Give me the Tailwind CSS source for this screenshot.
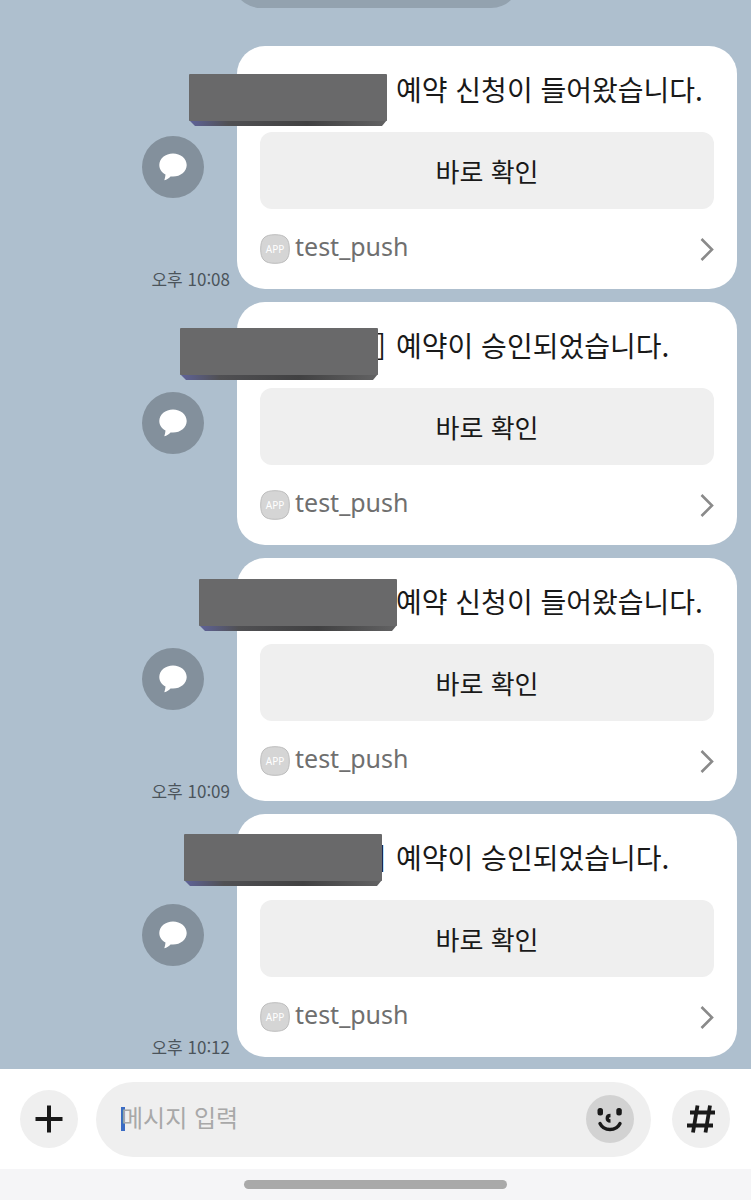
<!DOCTYPE html>
<html lang="ko">
<head>
    <meta charset="UTF-8">
    <meta name="viewport" content="width=device-width, initial-scale=1.0">
    <title>채팅방</title>
    <script src="https://cdn.jsdelivr.net/npm/@tailwindcss/browser@4"></script>
</head>
<body class="min-h-screen flex flex-col bg-[#aebfce] text-[#191919] font-['Noto_Sans_CJK_KR','Noto_Sans',sans-serif]">

    <!-- shared shapes -->
    <svg class="absolute w-0 h-0">
        <defs>
            <linearGradient id="edge">
                <stop offset="0" stop-color="#5f639a"/>
                <stop offset=".2" stop-color="#505053"/>
                <stop offset=".6" stop-color="#414142"/>
                <stop offset="1" stop-color="#626263"/>
            </linearGradient>
        </defs>
        <symbol id="bubble" viewBox="0 0 28 28">
            <path d="M14 .5C6.400 .5 .3 5.600 .3 12c0 4 2.400 7.500 6.200 9.600-.1 2-.5 3.700-1.200 5.600 2.500-.6 4.800-2 6.200-3.800.8.1 1.700.2 2.500.2 7.600 0 13.700-5.200 13.700-11.600S21.600.5 14 .5z" fill="#fff"/>
        </symbol>
        <symbol id="arrow" viewBox="0 0 14 24">
            <path d="M1.500 2 12 12.500 1.500 23" fill="none" stroke="#8a8a8a" stroke-width="2.600"/>
        </symbol>
        <symbol id="bar" viewBox="0 0 198 52">
            <path d="M0 46h198l-5 6H6z" fill="url(#edge)"/>
            <rect width="198" height="47" rx="1" fill="#69696a"/>
        </symbol>
        <symbol id="app" viewBox="0 0 30 30">
            <path d="M15 .7C4.500 .7 .7 4.500 .7 15S4.500 29.300 15 29.300 29.300 25.500 29.300 15 25.500.7 15 .7z" fill="#d5d5d5" stroke="#bcbcbc"/>
        </symbol>
    </svg>

    <main class="relative flex-1 overflow-hidden flex flex-col gap-[13px] pt-[46px] pb-3 pr-[14px]">
        <div class="absolute left-1/2 -translate-x-1/2 -top-[50px] w-[288px] h-[58px] rounded-[29px] bg-[#93a2af]"></div>

        <article class="flex">
            <div class="flex-1 flex flex-col items-end justify-between pt-[90px] pr-[7px]">
                <button class="size-[62px] mr-[26px] rounded-full bg-[#83909c] flex items-center justify-center" aria-label="공유"><svg class="size-7"><use href="#bubble"/></svg></button>
                <time class="text-[17px] leading-5 text-[#4b545b]">오후 10:08</time>
            </div>
            <div class="relative w-[500px] bg-white rounded-[28px] px-[23px] pt-5">
                <p class="pl-[136px] mb-5 text-[28px] leading-[46px] whitespace-nowrap">예약 신청이 들어왔습니다.</p>
                <svg class="absolute -left-[48px] top-[28px] w-[198px] h-[52px]"><use href="#bar"/></svg>
                <button class="w-full h-[77px] rounded-xl bg-[#efefef] text-[26px]">바로 확인</button>
                <a href="#" class="flex items-center h-20 text-[#6f6f6f]">
                    <span class="relative size-[30px] mr-[5px] flex items-center justify-center text-[10px] text-white font-['Noto_Sans']"><svg class="absolute inset-0 size-[30px]"><use href="#app"/></svg><span class="relative">APP</span></span>
                    <span class="pb-[6px] text-[25px] leading-8 font-['Noto_Sans']">test_push</span>
                    <svg class="ml-auto w-[14px] h-6"><use href="#arrow"/></svg>
                </a>
            </div>
        </article>

        <article class="flex">
            <div class="flex-1 flex flex-col items-end pt-[90px] pr-[7px]">
                <button class="size-[62px] mr-[26px] rounded-full bg-[#83909c] flex items-center justify-center" aria-label="공유"><svg class="size-7"><use href="#bubble"/></svg></button>
            </div>
            <div class="relative w-[500px] bg-white rounded-[28px] px-[23px] pt-5">
                <p class="flex mb-5 text-[28px] leading-[46px] whitespace-nowrap"><span class="w-[136px] pr-[10px] text-right">]</span>예약이 승인되었습니다.</p>
                <svg class="absolute -left-[57px] top-[26px] w-[198px] h-[52px]"><use href="#bar"/></svg>
                <button class="w-full h-[77px] rounded-xl bg-[#efefef] text-[26px]">바로 확인</button>
                <a href="#" class="flex items-center h-20 text-[#6f6f6f]">
                    <span class="relative size-[30px] mr-[5px] flex items-center justify-center text-[10px] text-white font-['Noto_Sans']"><svg class="absolute inset-0 size-[30px]"><use href="#app"/></svg><span class="relative">APP</span></span>
                    <span class="pb-[6px] text-[25px] leading-8 font-['Noto_Sans']">test_push</span>
                    <svg class="ml-auto w-[14px] h-6"><use href="#arrow"/></svg>
                </a>
            </div>
        </article>

        <article class="flex">
            <div class="flex-1 flex flex-col items-end justify-between pt-[90px] pr-[7px]">
                <button class="size-[62px] mr-[26px] rounded-full bg-[#83909c] flex items-center justify-center" aria-label="공유"><svg class="size-7"><use href="#bubble"/></svg></button>
                <time class="text-[17px] leading-5 text-[#4b545b]">오후 10:09</time>
            </div>
            <div class="relative w-[500px] bg-white rounded-[28px] px-[23px] pt-5">
                <p class="pl-[136px] mb-5 text-[28px] leading-[46px] whitespace-nowrap">예약 신청이 들어왔습니다.</p>
                <svg class="absolute -left-[38px] top-[21px] w-[198px] h-[52px]"><use href="#bar"/></svg>
                <button class="w-full h-[77px] rounded-xl bg-[#efefef] text-[26px]">바로 확인</button>
                <a href="#" class="flex items-center h-20 text-[#6f6f6f]">
                    <span class="relative size-[30px] mr-[5px] flex items-center justify-center text-[10px] text-white font-['Noto_Sans']"><svg class="absolute inset-0 size-[30px]"><use href="#app"/></svg><span class="relative">APP</span></span>
                    <span class="pb-[6px] text-[25px] leading-8 font-['Noto_Sans']">test_push</span>
                    <svg class="ml-auto w-[14px] h-6"><use href="#arrow"/></svg>
                </a>
            </div>
        </article>

        <article class="flex">
            <div class="flex-1 flex flex-col items-end justify-between pt-[90px] pr-[7px]">
                <button class="size-[62px] mr-[26px] rounded-full bg-[#83909c] flex items-center justify-center" aria-label="공유"><svg class="size-7"><use href="#bubble"/></svg></button>
                <time class="text-[17px] leading-5 text-[#4b545b]">오후 10:12</time>
            </div>
            <div class="relative w-[500px] bg-white rounded-[28px] px-[23px] pt-5">
                <p class="flex mb-5 text-[28px] leading-[46px] whitespace-nowrap"><span class="w-[136px] pr-[10px] text-right">]</span>예약이 승인되었습니다.</p>
                <svg class="absolute -left-[53px] top-[20px] w-[198px] h-[52px]"><use href="#bar"/></svg>
                <button class="w-full h-[77px] rounded-xl bg-[#efefef] text-[26px]">바로 확인</button>
                <a href="#" class="flex items-center h-20 text-[#6f6f6f]">
                    <span class="relative size-[30px] mr-[5px] flex items-center justify-center text-[10px] text-white font-['Noto_Sans']"><svg class="absolute inset-0 size-[30px]"><use href="#app"/></svg><span class="relative">APP</span></span>
                    <span class="pb-[6px] text-[25px] leading-8 font-['Noto_Sans']">test_push</span>
                    <svg class="ml-auto w-[14px] h-6"><use href="#arrow"/></svg>
                </a>
            </div>
        </article>
    </main>

    <form class="flex items-center h-[100px] pl-5 pr-[21px] bg-white">
        <button type="button" class="size-[58px] mr-[18px] rounded-full bg-[#efefef] flex items-center justify-center" aria-label="추가">
            <svg class="size-7" viewBox="0 0 28 28"><path d="M14 .5v27M.5 14h27" stroke="#191919" stroke-width="4"/></svg>
        </button>
        <div class="relative flex-1 flex items-center h-[75px] pl-[25px] pr-[17px] rounded-full bg-[#efefef]">
            <span class="absolute left-[25px] top-[25px] w-1 h-6 bg-[#3a6bc4]"></span>
            <input type="text" placeholder="메시지 입력" aria-label="메시지 입력" class="relative flex-1 min-w-0 pb-1 text-[24px] outline-none placeholder:text-[#a8a8a8]">
            <button type="button" class="size-12 rounded-full bg-[#d2d2d2] flex items-center justify-center" aria-label="이모티콘">
                <svg class="size-12" viewBox="0 0 48 48">
                    <rect x="11.500" y="13" width="5.500" height="7.500" rx="2.500" fill="#191919"/>
                    <rect x="30.300" y="13" width="5.500" height="7.500" rx="2.500" fill="#191919"/>
                    <path d="M24.500 20.500c-4.300 0-4.300 5.500 0 5.500" fill="none" stroke="#191919" stroke-width="3.400"/>
                    <path d="M14 28.500c3.800 8 16.200 8 20 0" fill="none" stroke="#191919" stroke-width="3.400" stroke-linecap="round"/>
                </svg>
            </button>
        </div>
        <button type="button" class="size-[58px] ml-[21px] rounded-full bg-[#efefef] flex items-center justify-center" aria-label="샵검색">
            <svg class="size-7" viewBox="0 0 28 28"><path d="M10.500 .5 6 27.500M23 .5l-4.500 27M3 7.500h25M0 20.500h26" stroke="#191919" stroke-width="3.800" fill="none"/></svg>
        </button>
    </form>

    <footer class="h-[31px] bg-[#f5f5f7] flex items-center justify-center">
        <div class="w-[263px] h-[9px] rounded-full bg-[#a9a9a9]"></div>
    </footer>
</body>
</html>
